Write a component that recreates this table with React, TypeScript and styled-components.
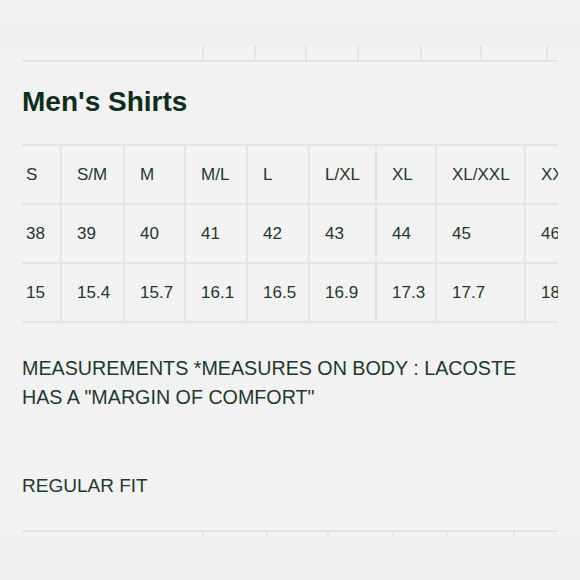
import styled, { createGlobalStyle } from 'styled-components';

const GlobalStyle = createGlobalStyle`
  html, body {
    margin: 0;
    padding: 0;
    background: #f2f2f2;
  }
  body {
    font-family: 'Liberation Sans', Arial, sans-serif;
    color: #1d3a2b;
  }
`;

const Page = styled.div`
  width: 580px;
  height: 580px;
  overflow: hidden;
  background: #f2f2f2;
  display: flex;
  flex-direction: column;
`;

const TopBand = styled.div`
  height: 46px;
  flex-shrink: 0;
  background: linear-gradient(180deg, #f3f3f3 0%, #efefef 100%);
`;

const Content = styled.div`
  padding: 0 22px;
  display: flex;
  flex-direction: column;
`;

const StubRow = styled.div<{ $height: number }>`
  display: flex;
  width: 536px;
  height: ${(p) => p.$height}px;
  overflow: hidden;
`;

const StubCell = styled.div<{ $w: number; $first?: boolean }>`
  flex: 0 0 ${(p) => p.$w}px;
  border-left: ${(p) => (p.$first ? 'none' : '2px solid #e4e4e4')};
  box-sizing: border-box;
`;

const TailRow = styled(StubRow)`
  border-bottom: 2px solid #e4e4e4;
`;

const HeadRow = styled(StubRow)`
  border-top: 2px solid #e4e4e4;
`;

const Title = styled.h2`
  margin: 24px 0 26px;
  font-size: 28px;
  line-height: 32px;
  font-weight: 700;
  color: #0e2d1c;
`;

const TableWrap = styled.div`
  width: 536px;
  overflow: hidden;
`;

const SizeTable = styled.table`
  border-collapse: collapse;
  table-layout: fixed;
  width: 596px;
`;

const Row = styled.tr`
  border-top: 2px solid #e4e4e4;
  border-bottom: 2px solid #e4e4e4;
`;

const Cell = styled.td<{ $first?: boolean }>`
  height: 57px;
  padding: 0 0 0 ${(p) => (p.$first ? 4 : 15)}px;
  border-left: ${(p) => (p.$first ? 'none' : '2px solid #e4e4e4')};
  font-size: 17px;
  color: #1d3a2b;
  white-space: nowrap;
  vertical-align: middle;
`;

const Note = styled.p`
  margin: 31px 0 0;
  font-size: 19.7px;
  line-height: 29px;
  color: #1d3a2b;
`;

const Fit = styled(Note)`
  margin-top: 59px;
  font-size: 19px;
`;

const BottomTable = styled.div`
  margin-top: 30px;
`;

const BottomBand = styled.div`
  flex: 1;
  background: #f0f0f0;
`;

const colWidths = [39, 63, 61, 62, 62, 67, 60, 89, 93];

const rows = [
  ['S', 'S/M', 'M', 'M/L', 'L', 'L/XL', 'XL', 'XL/XXL', 'XXL'],
  ['38', '39', '40', '41', '42', '43', '44', '45', '46'],
  ['15', '15.4', '15.7', '16.1', '16.5', '16.9', '17.3', '17.7', '18'],
];

const tailWidths = [180, 52, 51, 52, 63, 60, 66, 12];
const headWidths = [180, 64, 61, 65, 54, 67, 45];

export default function App() {
  return (
    <>
      <GlobalStyle />
      <Page>
        <TopBand />
        <Content>
          <TailRow $height={14}>
            {tailWidths.map((w, i) => (
              <StubCell key={i} $w={w} $first={i === 0} />
            ))}
          </TailRow>

          <Title>Men's Shirts</Title>

          <TableWrap>
            <SizeTable>
              <colgroup>
                {colWidths.map((w, i) => (
                  <col key={i} style={{ width: w }} />
                ))}
              </colgroup>
              <tbody>
                {rows.map((row, r) => (
                  <Row key={r}>
                    {row.map((val, c) => (
                      <Cell key={c} $first={c === 0}>
                        {val}
                      </Cell>
                    ))}
                  </Row>
                ))}
              </tbody>
            </SizeTable>
          </TableWrap>

          <Note>
            MEASUREMENTS *MEASURES ON BODY : LACOSTE
            <br />
            HAS A "MARGIN OF COMFORT"
          </Note>

          <Fit>REGULAR FIT</Fit>

          <BottomTable>
            <HeadRow $height={5}>
              {headWidths.map((w, i) => (
                <StubCell key={i} $w={w} $first={i === 0} />
              ))}
            </HeadRow>
          </BottomTable>
        </Content>
        <BottomBand />
      </Page>
    </>
  );
}
